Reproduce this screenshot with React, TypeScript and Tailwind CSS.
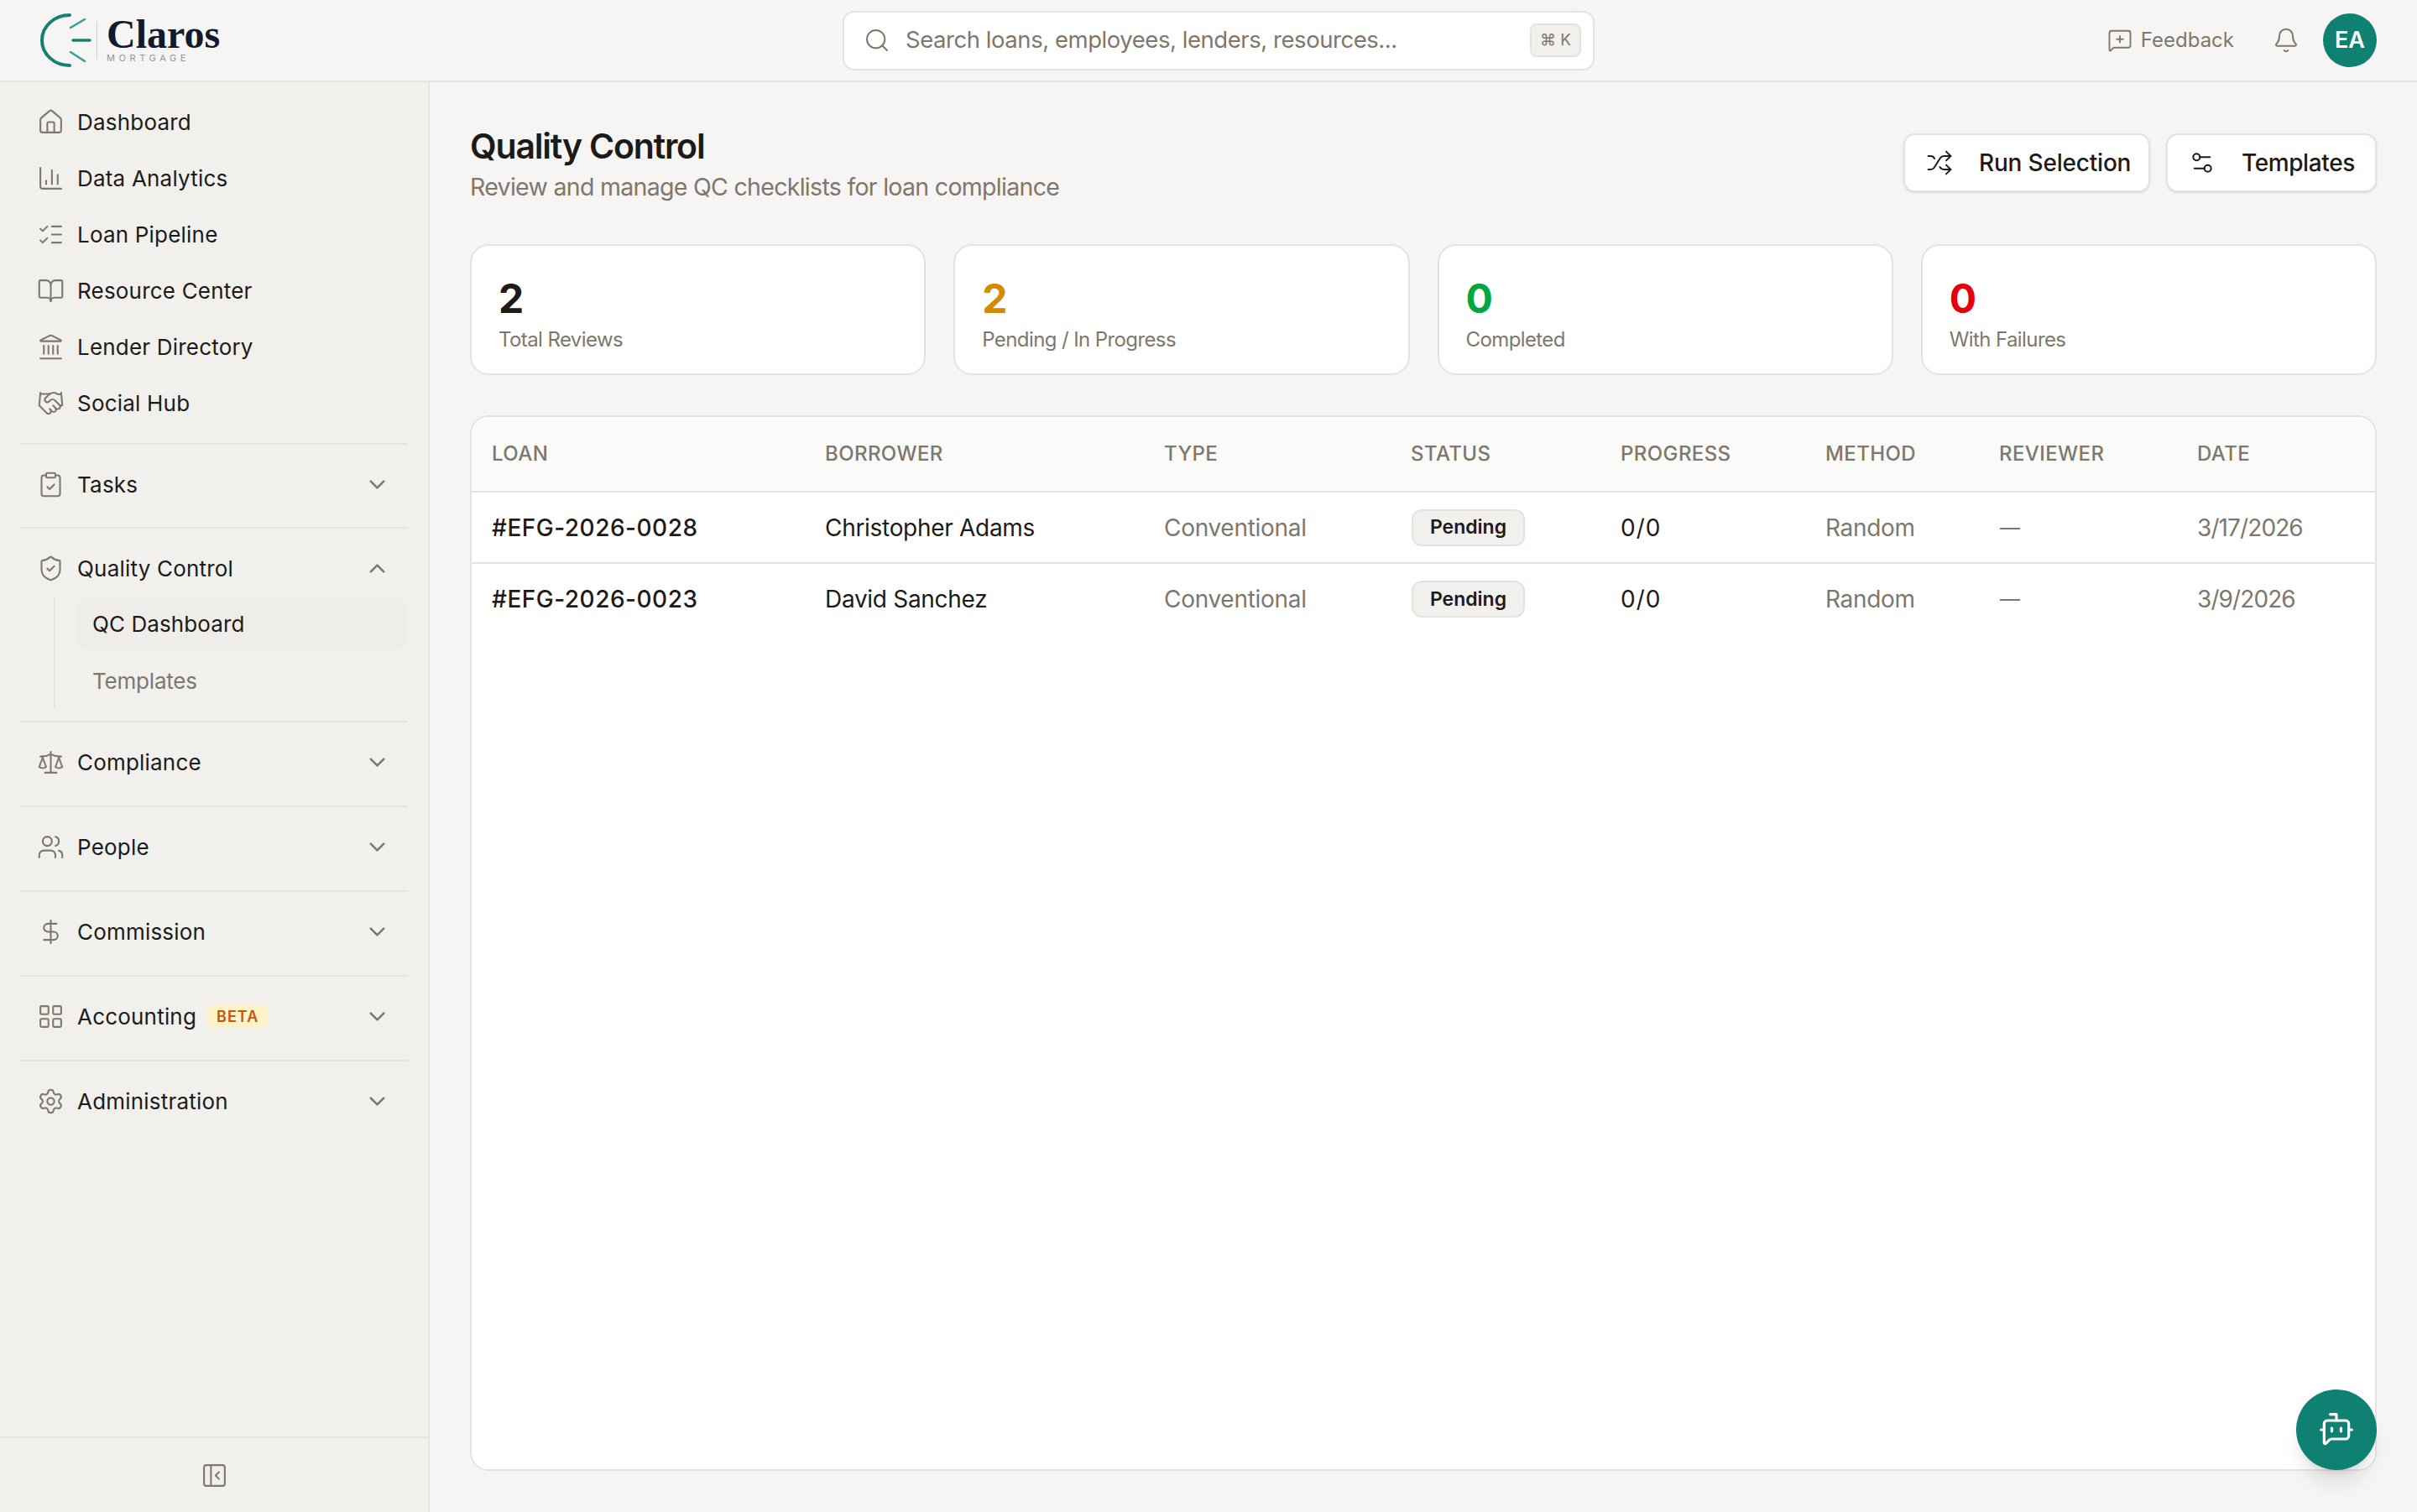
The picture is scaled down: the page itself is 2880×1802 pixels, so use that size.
import {
  BarChart3, Bell, BookOpen, BotMessageSquare, ChevronDown, ChevronUp, ClipboardCheck, DollarSign, Handshake, House,
  Landmark, LayoutGrid, ListChecks, MessageSquarePlus, PanelLeftClose, Scale, Search, Settings, Settings2, ShieldCheck,
  Shuffle, Users,
} from "lucide-react";
import type { ComponentType } from "react";

type IconType = ComponentType<{ size?: number; strokeWidth?: number; className?: string }>;

const topLinks: { label: string; icon: IconType }[] = [
  { label: "Dashboard", icon: House },
  { label: "Data Analytics", icon: BarChart3 },
  { label: "Loan Pipeline", icon: ListChecks },
  { label: "Resource Center", icon: BookOpen },
  { label: "Lender Directory", icon: Landmark },
  { label: "Social Hub", icon: Handshake },
];

const stats = [
  { value: "2", label: "Total Reviews", color: "text-[#1c1b19]" },
  { value: "2", label: "Pending / In Progress", color: "text-[#d58a06]" },
  { value: "0", label: "Completed", color: "text-[#00a63e]" },
  { value: "0", label: "With Failures", color: "text-[#e7000b]" },
];

const columns = [
  { label: "Loan", width: "w-[397px]" },
  { label: "Borrower", width: "w-[404px]" },
  { label: "Type", width: "w-[294px]" },
  { label: "Status", width: "w-[250px]" },
  { label: "Progress", width: "w-[244px]" },
  { label: "Method", width: "w-[207px]" },
  { label: "Reviewer", width: "w-[236px]" },
  { label: "Date", width: "" },
];

const rows = [
  { loan: "#EFG-2026-0028", borrower: "Christopher Adams", date: "3/17/2026" },
  { loan: "#EFG-2026-0023", borrower: "David Sanchez", date: "3/9/2026" },
];

function NavRow({ icon: Icon, label, open, badge }: { icon: IconType; label: string; open?: boolean; badge?: boolean }) {
  return (
    <div className="flex h-[67px] items-center pl-[20px] pr-[21px] text-[26px] tracking-[0.2px] text-[#1c1b19]">
      <Icon size={33} strokeWidth={1.5} className="shrink-0 text-[#7d776d]" />
      <span className="ml-[15px]">{label}</span>
      {badge && (
        <span className="ml-[13px] flex h-[27px] items-center rounded-[7px] border-2 border-[#fdeecb] bg-[#fef3c7] px-[9px] text-[18px] font-semibold tracking-[1px] text-[#c2570c]">
          BETA
        </span>
      )}
      {open === undefined ? null : open ? (
        <ChevronUp size={31} strokeWidth={2} className="ml-auto text-[#7d776d]" />
      ) : (
        <ChevronDown size={31} strokeWidth={2} className="ml-auto text-[#7d776d]" />
      )}
    </div>
  );
}

function Group({ icon, label, badge, tight }: { icon: IconType; label: string; badge?: boolean; tight?: boolean }) {
  return (
    <div className={`border-t-2 border-[#e5e3df] pt-[14px] ${tight ? "pb-[17px]" : "pb-[18px]"}`}>
      <NavRow icon={icon} label={label} open={false} badge={badge} />
    </div>
  );
}

function Sidebar() {
  return (
    <aside className="flex w-[512px] shrink-0 flex-col border-r-2 border-[#e5e3df] bg-[#f1f0ed]">
      <nav className="flex-1 px-[24px] pt-[14px]">
        <div className="pb-[14px]">
          {topLinks.map((link) => (
            <NavRow key={link.label} icon={link.icon} label={link.label} />
          ))}
        </div>
        <Group icon={ClipboardCheck} label="Tasks" tight />
        <div className="border-t-2 border-[#e5e3df] pb-[16px] pt-[14px]">
          <NavRow icon={ShieldCheck} label="Quality Control" open />
          <div className="ml-[40px] flex flex-col gap-[4px] border-l-2 border-[#e5e3df] pl-[24px]">
            <div className="flex h-[64px] items-center rounded-[14px] bg-[#eeedea] px-[20px] text-[26px] tracking-[0.1px] text-[#1c1b19]">
              QC Dashboard
            </div>
            <div className="flex h-[64px] items-center px-[20px] text-[26px] tracking-[-0.2px] text-[#7d776d]">
              Templates
            </div>
          </div>
        </div>
        <Group icon={Scale} label="Compliance" />
        <Group icon={Users} label="People" />
        <Group icon={DollarSign} label="Commission" />
        <Group icon={LayoutGrid} label="Accounting" badge />
        <Group icon={Settings} label="Administration" />
      </nav>
      <div className="flex h-[90px] items-center justify-center border-t-2 border-[#e5e3df]">
        <PanelLeftClose size={33} strokeWidth={1.5} className="text-[#7d776d]" />
      </div>
    </aside>
  );
}

function Logo() {
  return (
    <div className="flex w-[1004px] shrink-0 items-center pl-[47px]">
      <svg width="62" height="66" viewBox="0 0 62 66" fill="none" strokeLinecap="round" className="shrink-0">
        <path d="M36 3 C18 3 3 16 3 33 C3 50 18 63 36 63" stroke="#14806f" strokeWidth="4" />
        <path d="M37 18 L54 8" stroke="#2aa390" strokeWidth="2.5" />
        <path d="M40 33 L60 33" stroke="#14806f" strokeWidth="3.5" />
        <path d="M37 47 L54 58" stroke="#2aa390" strokeWidth="2.5" />
      </svg>
      <div className="ml-[6px] h-[46px] w-px bg-[#cfcfcb]" />
      <div className="ml-[11px] flex flex-col">
        <span className="text-[48px] font-bold leading-[38px] text-[#111a2e] [font-family:'Liberation_Serif',serif]">
          Claros
        </span>
        <span className="mt-[3px] text-[11px] leading-[12px] tracking-[4.6px] text-[#8c9aa0]">MORTGAGE</span>
      </div>
    </div>
  );
}

function TopBar() {
  return (
    <header className="flex h-[98px] shrink-0 items-center border-b-2 border-[#e5e3df] bg-[#f6f5f3] pr-[48px]">
      <Logo />
      <div className="flex h-[71px] w-[896px] items-center rounded-[14px] border-2 border-[#e5e3df] bg-white pl-[23px] pr-[14px]">
        <Search size={32} strokeWidth={1.5} className="shrink-0 text-[#7d776d]" />
        <span className="ml-[18px] text-[27.5px] tracking-[-0.45px] text-[#7d776d]">
          Search loans, employees, lenders, resources...
        </span>
        <kbd className="ml-auto flex h-[40px] w-[61px] items-center justify-center rounded-[8px] border-2 border-[#e5e3df] bg-[#f1f0ed] text-[19px] text-[#7d776d] [font-family:Inter,sans-serif]">
          ⌘ K
        </kbd>
      </div>
      <div className="ml-auto flex items-center">
        <MessageSquarePlus size={30} strokeWidth={1.5} className="text-[#7d776d]" />
        <span className="ml-[10px] text-[24px] text-[#7d776d]">Feedback</span>
        <Bell size={32} strokeWidth={1.5} className="ml-[46px] text-[#7d776d]" />
        <div className="ml-[28px] flex h-[64px] w-[64px] items-center justify-center rounded-full bg-[#0f8172] text-[27px] font-semibold text-white">
          EA
        </div>
      </div>
    </header>
  );
}

function QcTable() {
  return (
    <div className="mt-[48px] flex-1 overflow-hidden rounded-[22px] border-2 border-[#e5e3df] bg-white">
      <table className="w-full table-fixed">
        <thead>
          <tr className="h-[89px] border-b-2 border-[#e5e3df] bg-[#fafaf9]">
            {columns.map((col) => (
              <th
                key={col.label}
                className={`${col.width} pl-[24px] text-left text-[24px] font-medium uppercase tracking-[0.4px] text-[#7d776d]`}
              >
                {col.label}
              </th>
            ))}
          </tr>
        </thead>
        <tbody>
          {rows.map((row, i) => (
            <tr key={row.loan} className={i === 0 ? "h-[85px] border-b-2 border-[#e5e3df]" : "h-[85px]"}>
              <td className="pl-[24px] text-[28px] font-medium tracking-[0.5px] text-[#1c1b19]">{row.loan}</td>
              <td className="pl-[24px] text-[28px] tracking-[-0.3px] text-[#1c1b19]">{row.borrower}</td>
              <td className="pl-[24px] text-[28px] tracking-[-0.3px] text-[#7d776d]">Conventional</td>
              <td className="pl-[24px]">
                <span className="ml-[1px] inline-flex h-[44px] w-[135px] items-center justify-center rounded-[12px] border-2 border-[#e5e3df] bg-[#f1f0ed] text-[23px] font-semibold text-[#1c1b19]">
                  Pending
                </span>
              </td>
              <td className="pl-[24px] text-[28px] tracking-[1px] text-[#1c1b19]">0/0</td>
              <td className="pl-[24px] text-[28px] tracking-[-0.3px] text-[#7d776d]">Random</td>
              <td className="pl-[25px] text-[24px] text-[#7d776d]">—</td>
              <td className="pl-[24px] text-[28px] tracking-[-0.9px] text-[#7d776d]">{row.date}</td>
            </tr>
          ))}
        </tbody>
      </table>
    </div>
  );
}

export default function App() {
  return (
    <div className="relative flex h-[1802px] w-[2880px] flex-col overflow-hidden bg-[#f6f5f3] [font-family:Inter,sans-serif]">
      <TopBar />
      <div className="flex min-h-0 flex-1">
        <Sidebar />
        <main className="flex min-w-0 flex-1 flex-col px-[48px] pb-[49px] pt-[50px]">
          <div className="flex items-start justify-between">
            <div>
              <h1 className="text-[41px] font-semibold leading-[52px] tracking-[-1.2px] text-[#1c1b19]">Quality Control</h1>
              <p className="mt-[5px] text-[28.5px] leading-[36px] tracking-[-0.7px] text-[#7d776d]">
                Review and manage QC checklists for loan compliance
              </p>
            </div>
            <div className="mt-[11px] flex gap-[19px]">
              <button className="flex h-[70px] w-[294px] items-center rounded-[14px] border-2 border-[#e5e3df] bg-white pl-[25px] text-[28px] font-medium tracking-[-0.2px] text-[#1c1b19] shadow-sm">
                <Shuffle size={32} strokeWidth={1.5} />
                <span className="ml-[31px]">Run Selection</span>
              </button>
              <button className="flex h-[70px] w-[251px] items-center rounded-[14px] border-2 border-[#e5e3df] bg-white pl-[25px] text-[28px] font-medium tracking-[-0.4px] text-[#1c1b19] shadow-sm">
                <Settings2 size={32} strokeWidth={1.5} />
                <span className="ml-[31px]">Templates</span>
              </button>
            </div>
          </div>
          <div className="mt-[50px] grid grid-cols-4 gap-[33px]">
            {stats.map((stat) => (
              <div key={stat.label} className="h-[156px] rounded-[22px] border-2 border-[#e5e3df] bg-white px-[32px] pt-[37px]">
                <div className={`text-[48px] font-bold leading-[52px] ${stat.color}`}>{stat.value}</div>
                <div className="mt-[5px] text-[24px] leading-[36px] tracking-[-0.6px] text-[#7d776d]">{stat.label}</div>
              </div>
            ))}
          </div>
          <QcTable />
        </main>
      </div>
      <button className="absolute bottom-[50px] right-[48px] flex h-[96px] w-[96px] items-center justify-center rounded-full bg-[#0f8172] text-white shadow-xl">
        <BotMessageSquare size={44} strokeWidth={1.75} />
      </button>
    </div>
  );
}
